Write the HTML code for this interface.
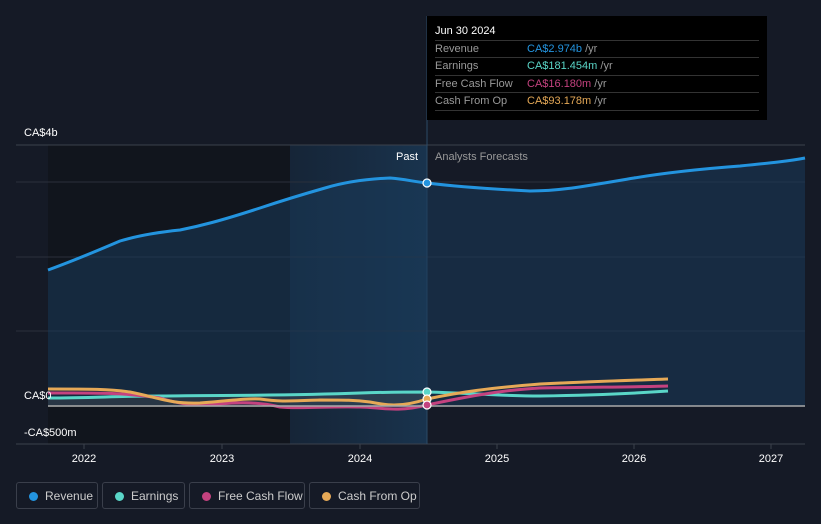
<!DOCTYPE html>
<html><head><style>
body{margin:0;background:#151a26;width:821px;height:524px;overflow:hidden;font-family:"Liberation Sans",sans-serif;}
.tt{position:absolute;left:427px;top:16px;width:340px;height:104px;background:#000;}
.tt .d{position:absolute;left:8px;top:9px;color:#fff;font-size:11px;}
.row{position:absolute;left:8px;width:324px;border-top:1px solid #333;height:17px;font-size:11px;color:#999;line-height:17px;}
.row span{position:absolute;left:92px;}
.row i{font-style:normal;color:#999;}
.leg{position:absolute;top:482px;height:27px;border:1px solid #3a3f4b;border-radius:3px;color:#ccc;font-size:12px;line-height:27px;box-sizing:border-box;}
.leg b{position:absolute;left:12px;top:9px;width:9px;height:9px;border-radius:50%;}
.leg span{position:absolute;left:28px;}
</style></head><body>
<svg width="821" height="524" style="position:absolute;left:0;top:0">
<defs><linearGradient id="hb" x1="0" x2="1"><stop offset="0" stop-color="#173049" stop-opacity="0.5"/><stop offset="1" stop-color="#1a3a58" stop-opacity="0.8"/></linearGradient></defs>
<rect x="48" y="145" width="242" height="299" fill="#11151d"/>
<rect x="290" y="145" width="137" height="299" fill="url(#hb)"/>
<g stroke="#2a303c" stroke-width="1">
<line x1="16" y1="182" x2="805" y2="182"/><line x1="16" y1="257" x2="805" y2="257"/><line x1="16" y1="331" x2="805" y2="331"/>
</g>
<line x1="16" y1="145" x2="805" y2="145" stroke="#3b414c"/>
<line x1="16" y1="444" x2="805" y2="444" stroke="#3b414c"/>
<line x1="427" y1="16" x2="427" y2="444" stroke="#2c4a66"/>
<path d="M48,270 C70,262 85,256 120,241 C140,235 160,232 180,230 C200,226 220,221 260,208 C275,203 290,198 325,188 C345,182 365,179 390,178 C405,179 415,182 427,183 C460,187 490,189 530,191 C560,191 580,187 634,178 C670,172 700,169 740,166 C770,163 790,161 805,158 L805,406 L48,406 Z" fill="#1a3b5a" fill-opacity="0.55"/>
<path d="M48,270 C70,262 85,256 120,241 C140,235 160,232 180,230 C200,226 220,221 260,208 C275,203 290,198 325,188 C345,182 365,179 390,178 C405,179 415,182 427,183 C460,187 490,189 530,191 C560,191 580,187 634,178 C670,172 700,169 740,166 C770,163 790,161 805,158" fill="none" stroke="#2394df" stroke-width="3"/>
<path d="M48,398 L120,397 L200,396 L300,396 L360,394 L427,392 L430,407 L48,407Z" fill="#555" fill-opacity="0.3"/>
<path d="M48,398 C90,398 120,396 160,396 C220,395 280,396 360,393 C390,392 410,392 427,392 C470,393 500,396 540,396 C600,395 640,393 668,391" fill="none" stroke="#5ad6c8" stroke-width="3"/>
<path d="M48,393 C90,393 120,392 160,398 C180,404 190,406 220,404 C240,402 260,402 280,407 C300,409 330,406 360,407 C380,407 395,413 427,405 C460,398 500,390 540,388 C600,387 640,387 668,386" fill="none" stroke="#c4427f" stroke-width="3"/>
<path d="M48,389 C90,389 110,389 130,392 C160,398 170,404 200,403 C230,401 245,398 260,399 C280,402 290,401 320,400 C345,400 355,400 370,402 C385,405 400,408 427,399 C460,392 490,388 540,384 C600,381 640,380 668,379" fill="none" stroke="#e6a957" stroke-width="3"/>
<line x1="48" y1="406" x2="805" y2="406" stroke="#aaa" stroke-width="1.5"/>
<circle cx="427" cy="183" r="4" fill="#2394df" stroke="#fff" stroke-width="1.2"/>
<circle cx="427" cy="392" r="4" fill="#5ad6c8" stroke="#fff" stroke-width="1.2"/>
<circle cx="427" cy="399" r="4" fill="#e6a957" stroke="#fff" stroke-width="1.2"/>
<circle cx="427" cy="405" r="4" fill="#c4427f" stroke="#fff" stroke-width="1.2"/>
<g font-size="11" fill="#fff">
<text x="24" y="136">CA$4b</text>
<text x="24" y="399">CA$0</text>
<text x="24" y="436">-CA$500m</text>
<text x="396" y="160">Past</text>
<text x="435" y="160" fill="#999">Analysts Forecasts</text>
<g text-anchor="middle" font-size="11"><text x="84" y="462">2022</text><text x="222" y="462">2023</text><text x="360" y="462">2024</text><text x="497" y="462">2025</text><text x="634" y="462">2026</text><text x="771" y="462">2027</text></g>
</g>
<g stroke="#3b414c"><line x1="84" y1="444" x2="84" y2="449"/><line x1="222" y1="444" x2="222" y2="449"/><line x1="360" y1="444" x2="360" y2="449"/><line x1="497" y1="444" x2="497" y2="449"/><line x1="634" y1="444" x2="634" y2="449"/><line x1="771" y1="444" x2="771" y2="449"/></g>
</svg>
<div class="tt">
<div class="d">Jun 30 2024</div>
<div class="row" style="top:24px">Revenue<span style="color:#2394df">CA$2.974b <i>/yr</i></span></div>
<div class="row" style="top:41px">Earnings<span style="color:#5ad6c8">CA$181.454m <i>/yr</i></span></div>
<div class="row" style="top:59px">Free Cash Flow<span style="color:#c4427f">CA$16.180m <i>/yr</i></span></div>
<div class="row" style="top:76px;border-bottom:1px solid #333">Cash From Op<span style="color:#e6a957">CA$93.178m <i>/yr</i></span></div>
</div>
<div class="leg" style="left:16px;width:82px"><b style="background:#2394df"></b><span>Revenue</span></div>
<div class="leg" style="left:102px;width:83px"><b style="background:#5ad6c8"></b><span>Earnings</span></div>
<div class="leg" style="left:189px;width:116px"><b style="background:#c4427f"></b><span>Free Cash Flow</span></div>
<div class="leg" style="left:309px;width:111px"><b style="background:#e6a957"></b><span>Cash From Op</span></div>
</body></html>
